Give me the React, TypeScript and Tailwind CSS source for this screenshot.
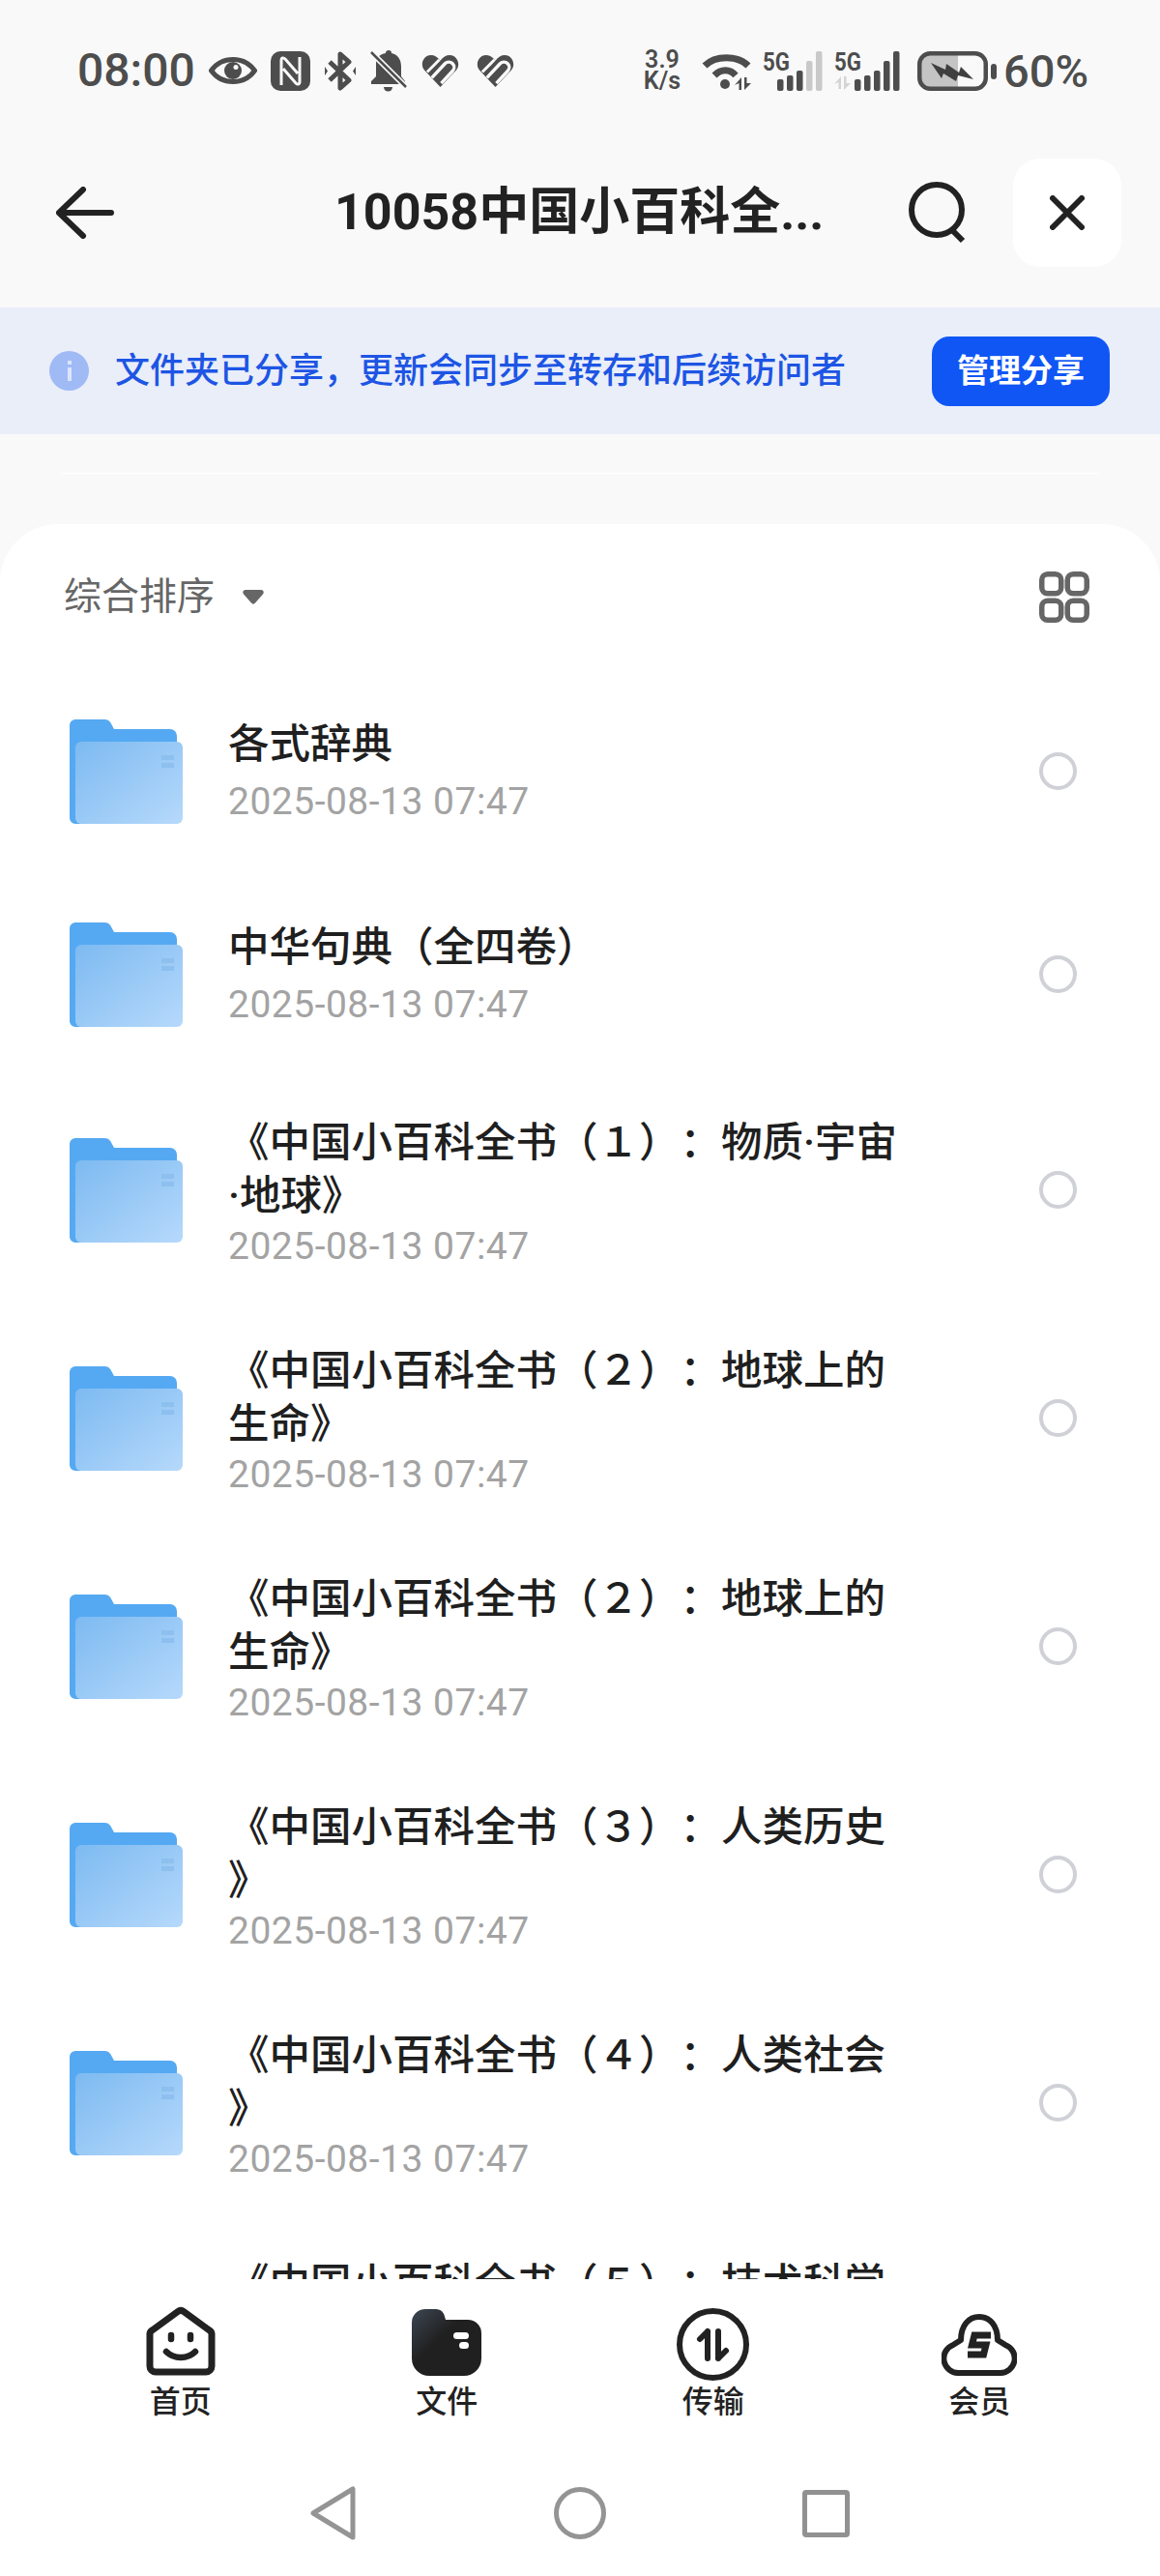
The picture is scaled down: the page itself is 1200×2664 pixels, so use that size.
const folders = [
  { name: "各式辞典", two: false },
  { name: "中华句典（全四卷）", two: false },
  { name: "《中国小百科全书（１）：物质·宇宙·地球》", two: true },
  { name: "《中国小百科全书（２）：地球上的生命》", two: true },
  { name: "《中国小百科全书（２）：地球上的生命》", two: true },
  { name: "《中国小百科全书（３）：人类历史》", two: true },
  { name: "《中国小百科全书（４）：人类社会》", two: true },
  { name: "《中国小百科全书（５）：技术科学》", two: true },
];

function FolderIcon() {
  return (
    <svg width="117" height="108" viewBox="0 0 117 108" className="shrink-0 mt-[2px]">
      <defs>
        <linearGradient id="folderFront" x1="0" y1="0" x2="1" y2="1">
          <stop offset="0" stopColor="#7dbaf1" />
          <stop offset="1" stopColor="#b6d9fb" />
        </linearGradient>
      </defs>
      <path d="M6 0H36c3 0 5 1 6.500 3.500L46 10H104a7 7 0 0 1 7 7V108H6a6 6 0 0 1-6-6V6a6 6 0 0 1 6-6z" fill="#55a9f2" />
      <rect x="6" y="23" width="111" height="85" rx="6" fill="url(#folderFront)" />
      <rect x="95" y="37" width="13" height="5" fill="#8dc0ef" />
      <rect x="95" y="45" width="13" height="5" fill="#8dc0ef" />
    </svg>
  );
}

function Heart() {
  return (
    <svg width="39" height="35" viewBox="0 0 40 36">
      <path d="M20 35L3 17C-2 11 2 1 10 1c4 0 7 2 10 6 3-4 6-6 10-6 8 0 12 10 7 16z" fill="#4d4d4d" />
      <path d="M11 25L25 10a5.500 5.500 0 0 1 8 8L21 31" fill="none" stroke="#f9f9f9" strokeWidth="3.500" />
      <path d="M6 19L19 6" fill="none" stroke="#f9f9f9" strokeWidth="3" />
    </svg>
  );
}

function Signal({ active, offset, showArrows }: { active: number; offset: number; showArrows?: boolean }) {
  const heights = [12, 16, 21, 31, 41];
  return (
    <svg width={offset + 46.5} height="41" viewBox={`0 0 ${offset + 46.5} 41`} className="overflow-visible">
      <text x="0" y="20" fontSize="25" fontWeight="700" fill="#4d4d4d" textLength="28" lengthAdjust="spacingAndGlyphs">
        5G
      </text>
      {showArrows && <path d="M7 26v13h-2.500v-7L0 34zM10 26h2.500v7H17l-7 7z" fill="#d4d4d4" />}
      {heights.map((h, i) => (
        <rect
          key={i}
          x={offset + i * 10}
          y={41 - h}
          width="6.500"
          height={h}
          rx="2"
          fill={i < active ? "#4d4d4d" : "#c9c9c9"}
        />
      ))}
    </svg>
  );
}

function StatusBar() {
  return (
    <div className="h-[146px] flex items-center pl-[80px] pr-[74px] text-[#4d4d4d]">
      <span className="text-[48px] font-medium leading-none w-[136px]">08:00</span>
      <div className="flex items-center">
        <svg width="50" height="28" viewBox="0 0 50 28">
          <path d="M2.500 14C9 5 16 2.500 25 2.500S41 5 47.500 14C41 23 34 25.500 25 25.500S9 23 2.500 14z" fill="none" stroke="#4d4d4d" strokeWidth="5" />
          <circle cx="25" cy="14" r="9" fill="#4d4d4d" />
          <circle cx="28" cy="10.500" r="2.500" fill="#f9f9f9" />
        </svg>
        <svg width="41" height="41" viewBox="0 0 41 41" className="ml-[14px]">
          <rect width="41" height="41" rx="10" fill="#4d4d4d" />
          <path d="M11 35V9c0-2 2-3 4-1l13 15M30 6v26c0 2-2 3-4 1L13 18" fill="none" stroke="#f9f9f9" strokeWidth="3" />
        </svg>
        <svg width="32" height="41" viewBox="0 0 32 41" className="ml-[15px]">
          <path d="M5 11L25 30 16 38V3l9 8L5 30" fill="none" stroke="#4d4d4d" strokeWidth="5" strokeLinejoin="round" />
          <path d="M0 16l3 4.500L0 25zM32 16l-3 4.500 3 4.500z" fill="#4d4d4d" />
        </svg>
        <svg width="38" height="43" viewBox="0 0 38 43" className="ml-[15px]">
          <path d="M19 0a3 3 0 0 1 3 3c7 1.500 10 7 10 14v10l4 5v3H1v-3l5-5V13C6 8 10 4 16 3a3 3 0 0 1 3-3z" fill="#4d4d4d" />
          <path d="M14 38h9a4.500 4.500 0 0 1-9 0z" fill="#4d4d4d" />
          <path d="M0 1L38 39" stroke="#f9f9f9" strokeWidth="6" />
          <path d="M1 2L37 38" stroke="#4d4d4d" strokeWidth="2.500" />
        </svg>
        <div className="ml-[15px]">
          <Heart />
        </div>
        <div className="ml-[18px]">
          <Heart />
        </div>
      </div>
      <div className="ml-auto flex items-center">
        <div className="flex flex-col text-[25px] font-semibold leading-[22px] w-[42px] items-center">
          <span>3.9</span>
          <span>K/s</span>
        </div>
        <svg width="51" height="40" viewBox="0 0 51 40" className="ml-[20px]">
          <path d="M3 15C14 4 37 4 48 15" fill="none" stroke="#4d4d4d" strokeWidth="7" />
          <path d="M13 25C20 18 29 18 35 25" fill="none" stroke="#4d4d4d" strokeWidth="7" />
          <circle cx="24" cy="34" r="5" fill="#4d4d4d" />
          <path d="M41 27v13h-2.500v-7L34 35zM44 27h2.500v6H51l-7 7z" fill="#4d4d4d" />
        </svg>
        <div className="ml-[12px]">
          <Signal active={3} offset={15} />
        </div>
        <div className="ml-[13px]">
          <Signal active={5} offset={21} showArrows />
        </div>
        <svg width="82" height="41" viewBox="0 0 82 41" className="ml-[18px]">
          <path d="M4 13a9 9 0 0 1 9-9H42V37H13a9 9 0 0 1-9-9z" fill="#c4c4c4" />
          <rect x="2.250" y="2.250" width="68.500" height="36.500" rx="11" fill="none" stroke="#4d4d4d" strokeWidth="4.500" />
          <rect x="76" y="13" width="6" height="16" rx="3" fill="#4d4d4d" />
          <path d="M14 12L29 19l1-6 13 9 2-6 13 13-16-4-2 6-13-8-2 5z" fill="#3f3f3f" />
        </svg>
        <span className="text-[47px] font-medium leading-none ml-[7px]">60%</span>
      </div>
    </div>
  );
}

function Header() {
  return (
    <div className="h-[148px] flex items-center pl-[58px] pr-[40px]">
      <svg width="60" height="54" viewBox="0 0 60 54" fill="none" stroke="#222" strokeWidth="6" strokeLinecap="round" strokeLinejoin="round">
        <path d="M28 3L3 27L28 51M3 27H57" />
      </svg>
      <h1 className="ml-[228px] text-[52px] font-bold text-[#222] leading-none whitespace-nowrap">
        10058中国小百科全...
      </h1>
      <svg width="64" height="64" viewBox="0 0 64 64" fill="none" stroke="#222" strokeWidth="6" className="ml-auto">
        <circle cx="31" cy="29" r="26" />
        <path d="M47 50l11 11" />
      </svg>
      <div className="ml-[46px] w-[112px] h-[112px] rounded-[28px] bg-white flex items-center justify-center">
        <svg width="36" height="36" viewBox="0 0 36 36" fill="none" stroke="#222" strokeWidth="6" strokeLinecap="round">
          <path d="M3 3L33 33M33 3L3 33" />
        </svg>
      </div>
    </div>
  );
}

function Banner() {
  return (
    <div className="mt-[24px] h-[131px] bg-[#e9eef9] flex items-center pl-[51px] pr-[52px]">
      <div className="w-[41px] h-[41px] rounded-full bg-[#a0baf6] flex flex-col items-center justify-center gap-[3px]">
        <span className="w-[4px] h-[4px] bg-[#dce5fb]" />
        <span className="w-[4px] h-[14px] bg-[#dce5fb]" />
      </div>
      <span className="ml-[27px] text-[36px] font-medium text-[#1d55e4] leading-none">
        文件夹已分享，更新会同步至转存和后续访问者
      </span>
      <button className="ml-auto w-[184px] h-[72px] rounded-[18px] bg-[#0f56f5] text-white text-[33px] font-semibold">
        管理分享
      </button>
    </div>
  );
}

function FolderRow({ name, two }: { name: string; two: boolean }) {
  return (
    <div className={two ? "h-[236px] shrink-0 flex items-center pl-[72px] pr-[86px]" : "h-[210px] shrink-0 flex items-center pl-[72px] pr-[86px]"}>
      <FolderIcon />
      <div className={two ? "ml-[47px] w-[700px] pt-[6px]" : "ml-[47px] w-[700px]"}>
        <div className="text-[42.5px] font-medium leading-[55px] text-[#1f1f1f] [line-break:anywhere]">{name}</div>
        <div className={two ? "text-[39px] tracking-[0.5px] leading-[48px] text-[#a3a3a3] mt-[1px]" : "text-[39px] tracking-[0.5px] leading-[48px] text-[#a3a3a3] mt-[8px]"}>
          2025-08-13 07:47
        </div>
      </div>
      <div className="ml-auto w-[39px] h-[39px] rounded-full border-[4px] border-[#cfd1d7]" />
    </div>
  );
}

function TabBar() {
  return (
    <div className="grid grid-cols-4 px-[49px] pt-[24px]">
      <div className="flex flex-col items-center">
        <div className="h-[76px] flex items-end">
          <svg width="72" height="72" viewBox="0 0 72 72" fill="none" stroke="#222" strokeWidth="7" strokeLinecap="round">
            <path d="M33 5.500a5 5 0 0 1 6 0l26 19a5 5 0 0 1 3 4V62a6 6 0 0 1-6 6H10a6 6 0 0 1-6-6V28.500a5 5 0 0 1 3-4z" />
            <path d="M26 30v4M46 30v4" strokeWidth="6.500" />
            <path d="M21 47c8 8 22 8 30 0" strokeWidth="6.500" />
          </svg>
        </div>
        <span className="mt-[7px] text-[32px] leading-[40px] font-medium text-[#222]">首页</span>
      </div>
      <div className="flex flex-col items-center">
        <div className="h-[76px] flex items-end">
          <svg width="72" height="69" viewBox="0 0 72 69">
            <defs>
              <linearGradient id="fileTab" x1="0" y1="0" x2="0.7" y2="0.7">
                <stop offset="0" stopColor="#3d4754" />
                <stop offset="0.6" stopColor="#202020" />
              </linearGradient>
            </defs>
            <path d="M14 0H24c5 0 8 2 9.500 6L35 11H58a14 14 0 0 1 14 14V51a18 18 0 0 1-18 18H18A18 18 0 0 1 0 51V14A14 14 0 0 1 14 0z" fill="url(#fileTab)" />
            <rect x="43" y="24" width="16" height="7" rx="3.500" fill="#fff" />
            <rect x="49" y="34" width="10" height="7" rx="3.500" fill="#fff" />
          </svg>
        </div>
        <span className="mt-[7px] text-[32px] leading-[40px] font-medium text-[#222]">文件</span>
      </div>
      <div className="flex flex-col items-center">
        <div className="h-[76px] flex items-end">
          <svg width="75" height="75" viewBox="0 0 75 75" fill="none" stroke="#222" strokeWidth="6" strokeLinecap="round" strokeLinejoin="round" className="-mb-[5px]">
            <circle cx="37.500" cy="37.500" r="34.500" />
            <path d="M32 24V52M32 24L24 32" />
            <path d="M43 52V24M43 52L51 44" />
          </svg>
        </div>
        <span className="mt-[7px] text-[32px] leading-[40px] font-medium text-[#222]">传输</span>
      </div>
      <div className="flex flex-col items-center">
        <div className="h-[76px] flex items-end">
          <svg width="78" height="64" viewBox="0 0 78 64" fill="none" stroke="#222" strokeWidth="6">
            <path d="M18 61H60A15 15 0 0 0 66 32L58 27C58 12 50 3 39 3S20 12 20 27L12 32A15 15 0 0 0 18 61z" strokeLinejoin="round" />
            <path d="M51 22H34l-2.500 10H46l-2.500 10H27" strokeWidth="7" />
          </svg>
        </div>
        <span className="mt-[7px] text-[32px] leading-[40px] font-medium text-[#222]">会员</span>
      </div>
    </div>
  );
}

function SystemNav() {
  return (
    <div className="mt-[67px] ml-[217px] w-[765px] grid grid-cols-3 justify-items-center items-center">
      <svg width="47" height="56" viewBox="0 0 47 56" fill="none" stroke="#949494" strokeWidth="5" strokeLinejoin="round">
        <path d="M44 3V53L3 28z" />
      </svg>
      <div className="w-[54px] h-[54px] rounded-full border-[5px] border-[#949494]" />
      <div className="w-[49px] h-[49px] rounded-[4px] border-[5px] border-[#919191]" />
    </div>
  );
}

export default function App() {
  return (
    <main className="w-[1200px] h-[2664px] overflow-hidden flex flex-col bg-[#f9f9f9] font-['Roboto','Noto_Sans_CJK_SC',sans-serif] [text-spacing-trim:space-all]">
      <StatusBar />
      <Header />
      <Banner />

      {/* Thin rule above the card */}
      <div className="mt-[40px] mx-[63px] h-px bg-white" />

      <section className="mt-[52px] flex-1 min-h-0 flex flex-col bg-white rounded-t-[60px] overflow-hidden">
        <div className="h-[150px] shrink-0 flex items-center pl-[66px] pr-[73px]">
          <span className="text-[39px] leading-none text-[#666]">综合排序</span>
          <svg width="22" height="15" viewBox="0 0 22 15" className="ml-[29px]">
            <path d="M3 0H19c2.500 0 3.500 2.500 2 4.500L13 13.500c-1 1.500-3 1.500-4 0L1 4.500C-.5 2.500.5 0 3 0z" fill="#666" />
          </svg>
          <svg width="52" height="53" viewBox="0 0 52 53" fill="none" stroke="#666" strokeWidth="5.500" className="ml-auto">
            <rect x="2.750" y="2.750" width="20" height="20" rx="6" />
            <rect x="29.250" y="2.750" width="20" height="20" rx="6" />
            <rect x="2.750" y="30.250" width="20" height="20" rx="6" />
            <rect x="29.250" y="30.250" width="20" height="20" rx="6" />
          </svg>
        </div>

        <div className="flex-1 min-h-0 overflow-hidden flex flex-col">
          {folders.map((f, i) => (
            <FolderRow key={i} name={f.name} two={f.two} />
          ))}
        </div>

        <nav className="h-[307px] shrink-0 bg-white">
          <TabBar />
          <SystemNav />
        </nav>
      </section>
    </main>
  );
}
